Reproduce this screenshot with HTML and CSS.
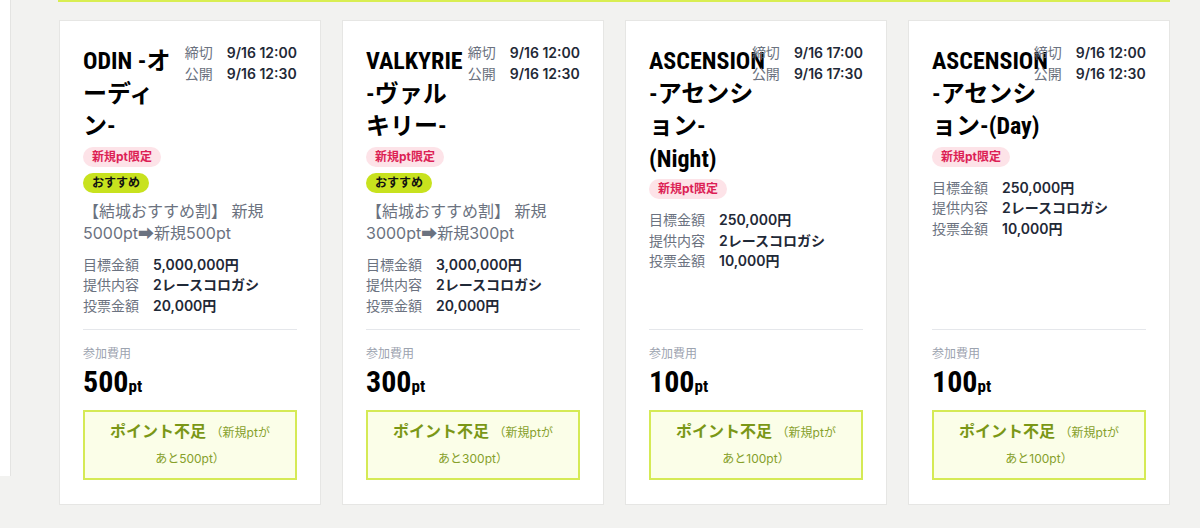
FILE: index.html
```html
<!DOCTYPE html>
<html lang="ja">
<head>
<meta charset="utf-8">
<title>Races</title>
<link rel="stylesheet" href="styles.css">
</head>
<body>
<div class="page">
  <aside class="side"></aside>
  <main class="main">
    <div class="topline"></div>
    <div class="cards">
      <article class="card">
        <header class="head">
          <h2 class="title">ODIN -オ<br>ーディ<br>ン-</h2>
          <dl class="dates">
            <dt>締切</dt><dd>9/16 12:00</dd>
            <dt>公開</dt><dd>9/16 12:30</dd>
          </dl>
        </header>
        <div class="badges">
          <span class="badge badge-new">新規pt限定</span>
          <span class="badge badge-rec">おすすめ</span>
        </div>
        <p class="desc">【結城おすすめ割】 新規5000pt➡新規500pt</p>
        <dl class="info">
          <dt>目標金額</dt><dd>5,000,000円</dd>
          <dt>提供内容</dt><dd>2レースコロガシ</dd>
          <dt>投票金額</dt><dd>20,000円</dd>
        </dl>
        <footer class="foot">
          <div class="fee-label">参加費用</div>
          <div class="fee"><span class="fee-num">500</span><span class="fee-unit">pt</span></div>
          <div class="btn"><strong>ポイント不足</strong> <small>（新規ptがあと500pt）</small></div>
        </footer>
      </article>
      <article class="card">
        <header class="head">
          <h2 class="title">VALKYRIE<br>-ヴァル<br>キリー-</h2>
          <dl class="dates">
            <dt>締切</dt><dd>9/16 12:00</dd>
            <dt>公開</dt><dd>9/16 12:30</dd>
          </dl>
        </header>
        <div class="badges">
          <span class="badge badge-new">新規pt限定</span>
          <span class="badge badge-rec">おすすめ</span>
        </div>
        <p class="desc">【結城おすすめ割】 新規3000pt➡新規300pt</p>
        <dl class="info">
          <dt>目標金額</dt><dd>3,000,000円</dd>
          <dt>提供内容</dt><dd>2レースコロガシ</dd>
          <dt>投票金額</dt><dd>20,000円</dd>
        </dl>
        <footer class="foot">
          <div class="fee-label">参加費用</div>
          <div class="fee"><span class="fee-num">300</span><span class="fee-unit">pt</span></div>
          <div class="btn"><strong>ポイント不足</strong> <small>（新規ptがあと300pt）</small></div>
        </footer>
      </article>
      <article class="card">
        <header class="head">
          <h2 class="title">ASCENSION<br>-アセンシ<br>ョン-<br>(Night)</h2>
          <dl class="dates">
            <dt>締切</dt><dd>9/16 17:00</dd>
            <dt>公開</dt><dd>9/16 17:30</dd>
          </dl>
        </header>
        <div class="badges">
          <span class="badge badge-new">新規pt限定</span>
        </div>
        <dl class="info">
          <dt>目標金額</dt><dd>250,000円</dd>
          <dt>提供内容</dt><dd>2レースコロガシ</dd>
          <dt>投票金額</dt><dd>10,000円</dd>
        </dl>
        <footer class="foot">
          <div class="fee-label">参加費用</div>
          <div class="fee"><span class="fee-num">100</span><span class="fee-unit">pt</span></div>
          <div class="btn"><strong>ポイント不足</strong> <small>（新規ptがあと100pt）</small></div>
        </footer>
      </article>
      <article class="card">
        <header class="head">
          <h2 class="title">ASCENSION<br>-アセンシ<br>ョン-(Day)</h2>
          <dl class="dates">
            <dt>締切</dt><dd>9/16 12:00</dd>
            <dt>公開</dt><dd>9/16 12:30</dd>
          </dl>
        </header>
        <div class="badges">
          <span class="badge badge-new">新規pt限定</span>
        </div>
        <dl class="info">
          <dt>目標金額</dt><dd>250,000円</dd>
          <dt>提供内容</dt><dd>2レースコロガシ</dd>
          <dt>投票金額</dt><dd>10,000円</dd>
        </dl>
        <footer class="foot">
          <div class="fee-label">参加費用</div>
          <div class="fee"><span class="fee-num">100</span><span class="fee-unit">pt</span></div>
          <div class="btn"><strong>ポイント不足</strong> <small>（新規ptがあと100pt）</small></div>
        </footer>
      </article>
    </div>
  </main>
</div>
</body>
</html>
```

FILE: styles.css
```css
* { box-sizing: border-box; }
html, body { margin: 0; padding: 0; }
body {
  background: #f2f2f0;
  font-family: Inter, "Noto Sans CJK JP", sans-serif;
  color: #1f2937;
  width: 1200px;
  height: 528px;
  overflow: hidden;
}
.page { display: flex; align-items: flex-start; }
.side {
  width: 11px;
  height: 476px;
  background: #ffffff;
  border-right: 1px solid #e4e4e2;
  flex-shrink: 0;
}
.main { padding-left: 47px; }
.topline { width: 1112px; height: 2px; background: #d9ee52; }
.cards {
  margin: 18px 0 0 1px;
  display: grid;
  grid-template-columns: repeat(4, 262px);
  column-gap: 21px;
}
.card {
  background: #fff;
  border: 1px solid #e6e6e4;
  height: 485px;
  padding: 21px 23px 24px;
  display: flex;
  flex-direction: column;
}
.head { display: flex; align-items: flex-start; }
.title {
  flex: 1;
  min-width: 0;
  margin: 3px 0 0;
  white-space: nowrap;
  font-family: "Roboto Condensed", Roboto, "Noto Sans CJK JP", sans-serif;
  font-stretch: 75%;
  font-weight: 700;
  font-size: 24px;
  line-height: 32.5px;
  color: #000;
}
.dates {
  margin: 0;
  flex-shrink: 0;
  display: grid;
  grid-template-columns: 28px auto;
  column-gap: 14px;
  font-size: 14px;
  line-height: 21px;
}
.dates dt { color: #6b7280; }
.dates dd { margin: 0; font-weight: 600; color: #1f2937; }
.badges {
  margin-top: 4px;
  display: flex;
  flex-direction: column;
  align-items: flex-start;
  gap: 6px;
}
.badge {
  font-size: 12px;
  font-weight: 700;
  line-height: 20px;
  padding: 0 9px;
  border-radius: 10px;
}
.badge-new { background: #fde3e8; color: #dc1f55; }
.badge-rec { background: #c8e21e; color: #111; }
.desc {
  margin: 7px 0 0;
  font-size: 16px;
  line-height: 22px;
  color: #6b7280;
}
.info {
  margin: 11px 0 0;
  display: grid;
  grid-template-columns: 70px 1fr;
  font-size: 14px;
  line-height: 20.5px;
}
.info dt { color: #6b7280; }
.info dd { margin: 0; font-weight: 600; color: #1f2937; }
.foot {
  margin-top: auto;
  border-top: 1px solid #e5e7eb;
  padding-top: 15px;
}
.fee-label { font-size: 12px; line-height: 18px; color: #9ca3af; }
.fee {
  margin-top: 3px;
  font-family: "Roboto Condensed", Roboto, sans-serif;
  font-stretch: 75%;
  font-weight: 700;
  color: #000;
  line-height: 32px;
}
.fee-num { font-size: 30px; }
.fee-unit { font-size: 17px; }
.btn {
  margin-top: 7px;
  border: 2px solid #d5ea55;
  background: #fbfee8;
  padding: 7px 21px;
  text-align: center;
  line-height: 25px;
  color: #7a9716;
}
.btn strong { font-size: 16px; font-weight: 700; }
.btn small { font-size: 12px; color: #86a02a; }
```
